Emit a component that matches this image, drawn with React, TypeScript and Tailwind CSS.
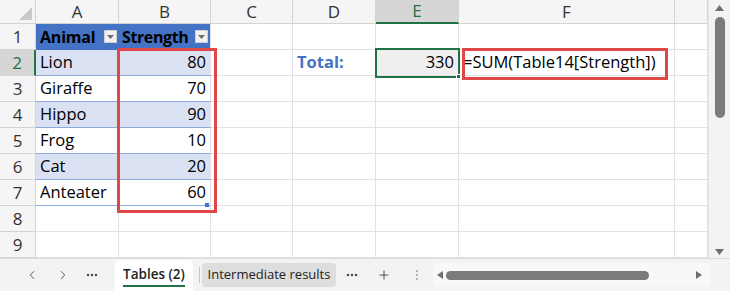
import React from 'react';
import { ChevronLeft, ChevronRight, Plus } from 'lucide-react';

const COLS = ['A', 'B', 'C', 'D', 'E', 'F', ''];

const DATA: [string, number][] = [
    ['Lion', 80],
    ['Giraffe', 70],
    ['Hippo', 90],
    ['Frog', 10],
    ['Cat', 20],
    ['Anteater', 60],
];

const FilterButton = () => (
    <span className="ml-auto mr-[2px] flex h-[13px] w-[13px] shrink-0 items-center justify-center border border-[#d0d0d0] bg-[#f2f2f2]">
        <svg width="7" height="4" viewBox="0 0 7 4">
            <path d="M0 0h7L3.5 4z" fill="#6b6b6b" />
        </svg>
    </span>
);

const Dots = () => (
    <svg width="12" height="4" viewBox="0 0 12 4">
        <circle cx="2" cy="2" r="1.2" fill="#444" />
        <circle cx="6" cy="2" r="1.2" fill="#444" />
        <circle cx="10" cy="2" r="1.2" fill="#444" />
    </svg>
);

function Grid() {
    const cell = 'border-r border-b border-[#e1e1e1]';
    const head = 'border-r border-b border-[#d4d4d4] bg-[#f5f5f5] flex items-center justify-center text-[17px] text-[#333]';

    return (
        <div className="relative grid w-[708px] grid-cols-[36px_83px_92px_82px_83px_83px_216px_33px] grid-rows-[24px_repeat(9,26px)] text-[16.5px] text-black">
            {/* corner */}
            <div className="relative border-r border-b border-[#d4d4d4] bg-[#f5f5f5]">
                <svg className="absolute right-[3px] bottom-[3px]" width="13" height="13" viewBox="0 0 13 13">
                    <path d="M13 0v13H0z" fill="#c9c9c9" />
                </svg>
            </div>
            {COLS.map((c) =>
                c === 'E' ? (
                    <div key={c} className="flex items-center justify-center border-r border-b-2 border-r-[#d4d4d4] border-b-[#217346] bg-[#d6d6d6] text-[17px] text-[#217346]">
                        {c}
                    </div>
                ) : (
                    <div key={c || 'G'} className={head}>{c}</div>
                )
            )}

            {/* row 1: table header */}
            <div className={head}>1</div>
            <div className="flex items-center border-b border-[#4472c4] bg-[#4472c4] pl-[4px] text-[16px] font-bold tracking-[-0.2px]">
                Animal
                <FilterButton />
            </div>
            <div className="flex items-center border-r border-b border-[#4472c4] border-r-[#e1e1e1] bg-[#4472c4] pl-[3px] text-[16px] font-bold tracking-[-0.4px]">
                Strength
                <FilterButton />
            </div>
            <div className={cell} />
            <div className={cell} />
            <div className={cell} />
            <div className={cell} />
            <div className={cell} />

            {DATA.map(([name, val], i) => {
                const band = i % 2 === 0 ? 'bg-[#d9e1f2]' : 'bg-white';
                const rowNum = i + 2;
                return (
                    <React.Fragment key={name}>
                        {rowNum === 2 ? (
                            <div className="flex items-center justify-center border-r-2 border-b border-r-[#217346] border-b-[#d4d4d4] bg-[#d6d6d6] text-[17px] text-[#217346]">2</div>
                        ) : (
                            <div className={head}>{rowNum}</div>
                        )}
                        <div className={`flex items-center border-b border-[#8ea9db] pl-[4px] ${band}`}>{name}</div>
                        <div className={`flex items-center justify-end border-r border-b border-[#8ea9db] border-r-[#e1e1e1] pr-[4px] ${band}`}>{val}</div>
                        <div className={cell} />
                        {rowNum === 2 ? (
                            <>
                                <div className={`${cell} flex items-center pl-[4px] font-bold text-[#4472c4]`}>Total:</div>
                                <div className={`${cell} flex items-center justify-end bg-[#efefef] pr-[4px]`}>330</div>
                                <div className={`${cell} flex items-center pl-[4px]`}>=SUM(Table14[Strength])</div>
                            </>
                        ) : (
                            <>
                                <div className={cell} />
                                <div className={cell} />
                                <div className={cell} />
                            </>
                        )}
                        <div className={cell} />
                    </React.Fragment>
                );
            })}

            {[8, 9].map((n) => (
                <React.Fragment key={n}>
                    <div className={head}>{n}</div>
                    {COLS.map((c) => (
                        <div key={c || 'G'} className={cell} />
                    ))}
                </React.Fragment>
            ))}

            {/* overlays */}
            <div className="pointer-events-none absolute left-[117px] top-[48px] h-[165px] w-[100px] border-[3px] border-[#e04848]" />
            <div className="pointer-events-none absolute left-[462px] top-[48px] h-[32px] w-[206px] border-[3px] border-[#e04848]" />
            <div className="pointer-events-none absolute left-[375px] top-[48px] h-[30px] w-[85px] border-2 border-[#217346]" />
            <div className="pointer-events-none absolute left-[456px] top-[74px] h-[5px] w-[5px] border border-white bg-[#217346]" />
            <div className="pointer-events-none absolute left-[205px] top-[203px] h-[4px] w-[4px] bg-[#4472c4]" />
        </div>
    );
}

function VScroll() {
    return (
        <div className="flex w-[22px] flex-col items-center border-l border-[#e6e6e6] bg-[#f3f3f3]">
            <svg className="mt-[5px]" width="9" height="6" viewBox="0 0 9 6">
                <path d="M4.5 0L9 6H0z" fill="#6e6e6e" />
            </svg>
            <div className="mt-[6px] h-[101px] w-[10px] rounded-full bg-[#7b7b7b]" />
            <div className="flex-1" />
            <svg className="mb-[3px]" width="9" height="6" viewBox="0 0 9 6">
                <path d="M0 0h9L4.5 6z" fill="#6e6e6e" />
            </svg>
        </div>
    );
}

function BottomBar() {
    return (
        <div className="flex h-[33px] items-center border-t border-[#dcdcdc] bg-[#f3f3f3] font-['Open_Sans',sans-serif] text-[13px] text-[#222]">
            <div className="ml-[25px] flex w-[14px] justify-center">
                <ChevronLeft size={14} strokeWidth={1.5} color="#444" />
            </div>
            <div className="ml-[17px] flex w-[14px] justify-center">
                <ChevronRight size={14} strokeWidth={1.5} color="#444" />
            </div>
            <div className="ml-[16px] flex w-[12px] justify-center">
                <Dots />
            </div>
            <div className="ml-[17px] flex h-[31px] w-[78px] flex-col items-center justify-center self-end rounded-t-[4px] bg-white">
                <span className="text-[13.5px] font-semibold leading-[18px]">Tables (2)</span>
                <span className="mt-[2px] h-[2px] w-[62px] bg-[#217346]" />
            </div>
            <div className="ml-[6px] h-[16px] w-px bg-[#c8c8c8]" />
            <div className="ml-[2px] flex h-[24px] w-[134px] items-center justify-center rounded-[4px] bg-[#dedede]">
                Intermediate results
            </div>
            <div className="ml-[10px] flex w-[12px] justify-center">
                <Dots />
            </div>
            <div className="ml-[19px] flex w-[14px] justify-center">
                <Plus size={14} strokeWidth={1.3} color="#222" />
            </div>
            <div className="ml-[24px] flex w-[4px] flex-col items-center gap-[2px]">
                <span className="h-[2px] w-[2px] bg-[#b5b5b5]" />
                <span className="h-[2px] w-[2px] bg-[#b5b5b5]" />
                <span className="h-[2px] w-[2px] bg-[#b5b5b5]" />
            </div>
            <div className="ml-[14px] flex h-[24px] w-[278px] items-center rounded-[4px] bg-[#f8f8f8] px-[4px]">
                <svg width="6" height="8" viewBox="0 0 6 8">
                    <path d="M6 0v8L0 4z" fill="#6e6e6e" />
                </svg>
                <div className="ml-[3px] h-[9px] w-[203px] rounded-full bg-[#7b7b7b]" />
                <div className="flex-1" />
                <svg className="mr-[5px]" width="6" height="8" viewBox="0 0 6 8">
                    <path d="M0 0v8l6-4z" fill="#6e6e6e" />
                </svg>
            </div>
        </div>
    );
}

export default function App() {
    return (
        <div className="flex h-[291px] w-[730px] flex-col overflow-hidden bg-white font-['Open_Sans',sans-serif]">
            <div className="flex h-[258px]">
                <Grid />
                <VScroll />
            </div>
            <BottomBar />
        </div>
    );
}
